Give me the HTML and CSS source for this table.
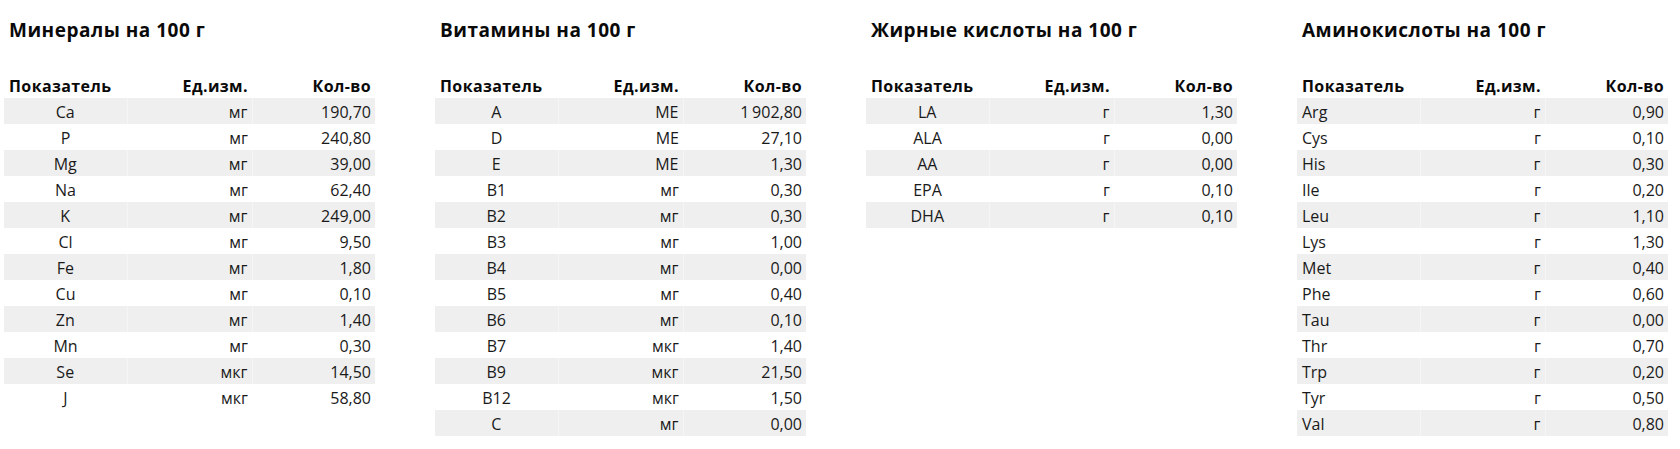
FILE: index.html
```html
<!DOCTYPE html>
<html lang="ru">
<head>
<meta charset="utf-8">
<title>Пищевая ценность</title>
<link rel="stylesheet" href="styles.css">
</head>
<body>
<main class="page">
  <section class="block">
    <h2 class="title">Минералы на 100 г</h2>
    <table class="nutr">
      <thead><tr><th>Показатель</th><th>Ед.изм.</th><th>Кол-во</th></tr></thead>
      <tbody>
        <tr><td>Ca</td><td>мг</td><td>190,70</td></tr>
        <tr><td>P</td><td>мг</td><td>240,80</td></tr>
        <tr><td>Mg</td><td>мг</td><td>39,00</td></tr>
        <tr><td>Na</td><td>мг</td><td>62,40</td></tr>
        <tr><td>K</td><td>мг</td><td>249,00</td></tr>
        <tr><td>Cl</td><td>мг</td><td>9,50</td></tr>
        <tr><td>Fe</td><td>мг</td><td>1,80</td></tr>
        <tr><td>Cu</td><td>мг</td><td>0,10</td></tr>
        <tr><td>Zn</td><td>мг</td><td>1,40</td></tr>
        <tr><td>Mn</td><td>мг</td><td>0,30</td></tr>
        <tr><td>Se</td><td>мкг</td><td>14,50</td></tr>
        <tr><td>J</td><td>мкг</td><td>58,80</td></tr>
      </tbody>
    </table>
  </section>
  <section class="block">
    <h2 class="title">Витамины на 100 г</h2>
    <table class="nutr">
      <thead><tr><th>Показатель</th><th>Ед.изм.</th><th>Кол-во</th></tr></thead>
      <tbody>
        <tr><td>A</td><td>МЕ</td><td>1&#8201;902,80</td></tr>
        <tr><td>D</td><td>МЕ</td><td>27,10</td></tr>
        <tr><td>E</td><td>МЕ</td><td>1,30</td></tr>
        <tr><td>B1</td><td>мг</td><td>0,30</td></tr>
        <tr><td>B2</td><td>мг</td><td>0,30</td></tr>
        <tr><td>B3</td><td>мг</td><td>1,00</td></tr>
        <tr><td>B4</td><td>мг</td><td>0,00</td></tr>
        <tr><td>B5</td><td>мг</td><td>0,40</td></tr>
        <tr><td>B6</td><td>мг</td><td>0,10</td></tr>
        <tr><td>B7</td><td>мкг</td><td>1,40</td></tr>
        <tr><td>B9</td><td>мкг</td><td>21,50</td></tr>
        <tr><td>B12</td><td>мкг</td><td>1,50</td></tr>
        <tr><td>C</td><td>мг</td><td>0,00</td></tr>
      </tbody>
    </table>
  </section>
  <section class="block">
    <h2 class="title">Жирные кислоты на 100 г</h2>
    <table class="nutr">
      <thead><tr><th>Показатель</th><th>Ед.изм.</th><th>Кол-во</th></tr></thead>
      <tbody>
        <tr><td>LA</td><td>г</td><td>1,30</td></tr>
        <tr><td>ALA</td><td>г</td><td>0,00</td></tr>
        <tr><td>AA</td><td>г</td><td>0,00</td></tr>
        <tr><td>EPA</td><td>г</td><td>0,10</td></tr>
        <tr><td>DHA</td><td>г</td><td>0,10</td></tr>
      </tbody>
    </table>
  </section>
  <section class="block">
    <h2 class="title">Аминокислоты на 100 г</h2>
    <table class="nutr nutr-left">
      <thead><tr><th>Показатель</th><th>Ед.изм.</th><th>Кол-во</th></tr></thead>
      <tbody>
        <tr><td>Arg</td><td>г</td><td>0,90</td></tr>
        <tr><td>Cys</td><td>г</td><td>0,10</td></tr>
        <tr><td>His</td><td>г</td><td>0,30</td></tr>
        <tr><td>Ile</td><td>г</td><td>0,20</td></tr>
        <tr><td>Leu</td><td>г</td><td>1,10</td></tr>
        <tr><td>Lys</td><td>г</td><td>1,30</td></tr>
        <tr><td>Met</td><td>г</td><td>0,40</td></tr>
        <tr><td>Phe</td><td>г</td><td>0,60</td></tr>
        <tr><td>Tau</td><td>г</td><td>0,00</td></tr>
        <tr><td>Thr</td><td>г</td><td>0,70</td></tr>
        <tr><td>Trp</td><td>г</td><td>0,20</td></tr>
        <tr><td>Tyr</td><td>г</td><td>0,50</td></tr>
        <tr><td>Val</td><td>г</td><td>0,80</td></tr>
      </tbody>
    </table>
  </section>
</main>
</body>
</html>
```

FILE: styles.css
```css
* { box-sizing: border-box; }

html, body {
  margin: 0;
  padding: 0;
  background: #ffffff;
}

body {
  font-family: "Open Sans", "Noto Sans", sans-serif;
  color: #111111;
}

.page {
  display: grid;
  grid-template-columns: repeat(4, 371px);
  column-gap: 60px;
  padding: 18px 0 0 4px;
  align-items: start;
}

.title {
  margin: 0 0 32px 5px;
  font-size: 19px;
  line-height: 24px;
  font-weight: 700;
  letter-spacing: 0.5px;
  color: #0a0a0a;
}

.nutr {
  width: 371px;
  border-collapse: collapse;
  table-layout: fixed;
}

.nutr th:nth-child(1), .nutr td:nth-child(1) { width: 123px; }
.nutr th:nth-child(2), .nutr td:nth-child(2) { width: 125px; }
.nutr th:nth-child(3), .nutr td:nth-child(3) { width: 123px; }

.nutr th {
  height: 24px;
  padding: 0 4px;
  font-size: 16px;
  line-height: 24px;
  font-weight: 700;
  letter-spacing: 0.4px;
  text-align: right;
  color: #0a0a0a;
}

.nutr th:first-child {
  text-align: left;
  padding-left: 5px;
}

.nutr td {
  height: 26px;
  padding: 3px 4px 0 4px;
  font-size: 16px;
  line-height: 23px;
  font-weight: 400;
  text-align: right;
  color: #1a1a1a;
}

.nutr td:first-child {
  text-align: center;
}

.nutr-left td:first-child {
  text-align: left;
  padding-left: 5px;
}

.nutr tbody tr:nth-child(odd) td {
  background: #efefef;
}

.nutr tbody tr:nth-child(odd) td + td {
  border-left: 1px solid #f5f5f5;
}
```
